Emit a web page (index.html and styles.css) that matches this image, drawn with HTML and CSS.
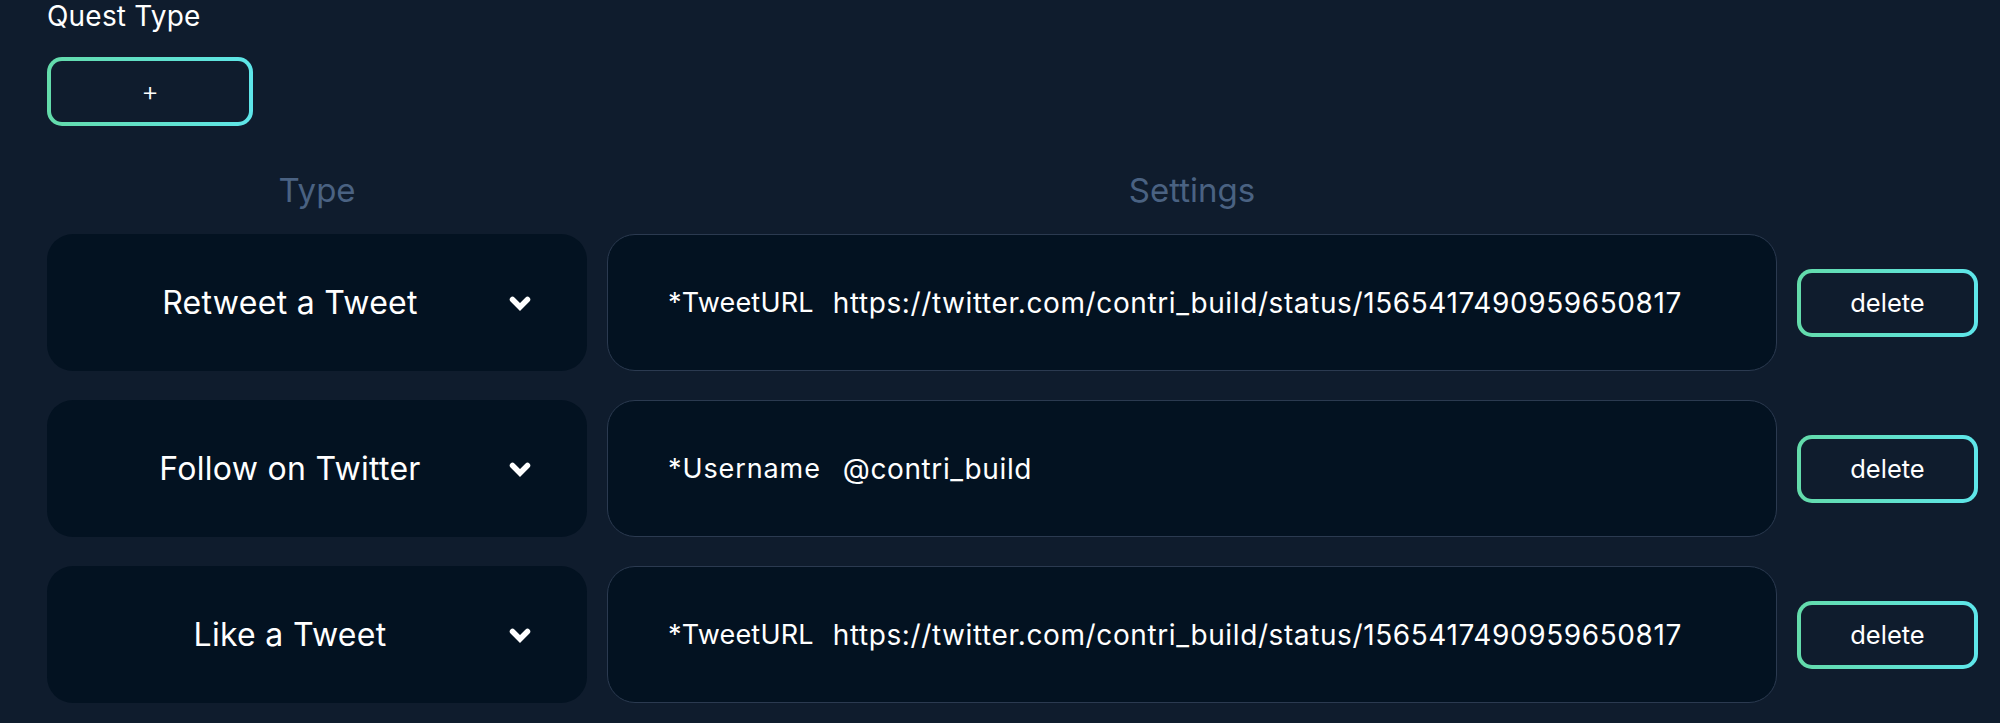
FILE: index.html
```html
<!DOCTYPE html>
<html>
<head>
<meta charset="utf-8">
<link rel="stylesheet" href="styles.css">
</head>
<body>
<div class="page">
  <div class="label">Quest Type</div>
  <button class="grad-btn add-btn">+</button>
  <div class="quest-grid">
    <div class="col-head">Type</div>
    <div class="col-head">Settings</div>
    <div></div>

    <div class="type-box"><span class="type-label">Retweet a Tweet</span><svg class="chev" viewBox="0 0 22 16"><polyline points="3.5,3.5 11,11 18.5,3.5"/></svg></div>
    <div class="settings-box"><span class="set-key">*TweetURL</span><span class="set-val">https://twitter.com/contri_build/status/1565417490959650817</span></div>
    <div class="del-cell"><button class="grad-btn del-btn">delete</button></div>

    <div class="type-box"><span class="type-label">Follow on Twitter</span><svg class="chev" viewBox="0 0 22 16"><polyline points="3.5,3.5 11,11 18.5,3.5"/></svg></div>
    <div class="settings-box"><span class="set-key set-key-wide">*Username</span><span class="set-val">@contri_build</span></div>
    <div class="del-cell"><button class="grad-btn del-btn">delete</button></div>

    <div class="type-box"><span class="type-label">Like a Tweet</span><svg class="chev" viewBox="0 0 22 16"><polyline points="3.5,3.5 11,11 18.5,3.5"/></svg></div>
    <div class="settings-box"><span class="set-key">*TweetURL</span><span class="set-val">https://twitter.com/contri_build/status/1565417490959650817</span></div>
    <div class="del-cell"><button class="grad-btn del-btn">delete</button></div>
  </div>
</div>
</body>
</html>
```

FILE: styles.css
```css
html, body {
  margin: 0;
  padding: 0;
  background: #0f1c2d;
  color: #ffffff;
  font-family: Inter, "Noto Sans", sans-serif;
}

.page {
  padding: 0 22px 0 47px;
}

.label {
  font-size: 28px;
  line-height: 32px;
  color: #ffffff;
  letter-spacing: 0.2px;
}

.grad-btn {
  display: flex;
  align-items: center;
  justify-content: center;
  box-sizing: border-box;
  border: 4px solid transparent;
  border-radius: 15px;
  background:
    linear-gradient(#0f1c2d, #0f1c2d) padding-box,
    linear-gradient(90deg, #63dbaa, #5ee6ea) border-box;
  color: #ffffff;
  font-family: Inter, "Noto Sans", sans-serif;
  padding: 0;
  cursor: pointer;
}

.add-btn {
  margin-top: 25px;
  width: 206px;
  height: 69px;
  font-size: 27px;
  font-weight: 300;
}

.quest-grid {
  margin-top: 44px;
  display: grid;
  grid-template-columns: 540px 1fr 181px;
  grid-template-rows: 35px repeat(3, 137px);
  column-gap: 20px;
  row-gap: 29px;
}

.col-head {
  text-align: center;
  font-size: 33px;
  line-height: 40px;
  height: 35px;
  color: #4a6282;
}

.type-box {
  display: flex;
  align-items: center;
  background: #031221;
  border-radius: 26px;
  padding: 0 56px 0 24px;
}

.type-label {
  flex: 1;
  text-align: center;
  font-size: 32px;
  letter-spacing: 0.3px;
  color: #ffffff;
}

.chev {
  width: 22px;
  height: 16px;
  flex: none;
  margin-top: 2px;
}

.chev polyline {
  fill: none;
  stroke: #ffffff;
  stroke-width: 5.5;
  stroke-linecap: round;
  stroke-linejoin: miter;
}

.settings-box {
  display: flex;
  align-items: center;
  box-sizing: border-box;
  background: #031221;
  border: 1.5px solid #2b3a50;
  border-radius: 28px;
  padding: 0 0 0 60px;
  font-size: 27px;
  color: #ffffff;
  white-space: nowrap;
}

.set-key {
  margin-right: 19px;
  letter-spacing: 0.2px;
}

.set-key-wide {
  letter-spacing: 0.9px;
  margin-right: 22px;
}

.set-val {
  font-size: 28px;
  letter-spacing: 0.6px;
}

.del-cell {
  display: flex;
  align-items: center;
}

.del-btn {
  width: 181px;
  height: 68px;
  font-size: 25.5px;
}
```
